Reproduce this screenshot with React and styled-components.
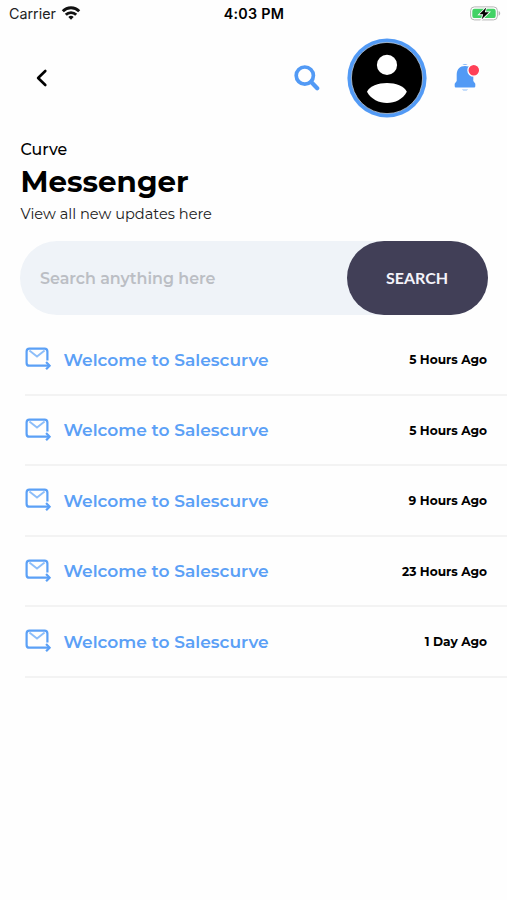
import React from 'react';
import styled, { createGlobalStyle } from 'styled-components';

const messages = [
  { id: 1, title: 'Welcome to Salescurve', time: '5 Hours Ago' },
  { id: 2, title: 'Welcome to Salescurve', time: '5 Hours Ago' },
  { id: 3, title: 'Welcome to Salescurve', time: '9 Hours Ago' },
  { id: 4, title: 'Welcome to Salescurve', time: '23 Hours Ago' },
  { id: 5, title: 'Welcome to Salescurve', time: '1 Day Ago' },
];

const WifiIcon = () => (
  <svg width="20" height="14" viewBox="0 0 20 14" fill="none" stroke="#111" strokeWidth="2.9">
    <path d="M1.8 5.2a11.6 11.6 0 0 1 16.4 0" />
    <path d="M4.8 8.8a7.4 7.4 0 0 1 10.4 0" />
    <path d="M10 13.8 7.3 11.1a3.9 3.9 0 0 1 5.4 0Z" fill="#111" stroke="none" />
  </svg>
);

const BatteryIcon = () => (
  <svg width="31" height="15" viewBox="0 0 31 15">
    <rect x="0.6" y="0.9" width="26.8" height="13" rx="3.8" fill="#fff" stroke="#b5b5b5" />
    <rect x="2.3" y="2.7" width="23.4" height="9.4" rx="2.2" fill="#43d266" />
    <path d="M28.7 5v4.8c2-.9 2-3.9 0-4.8Z" fill="#b5b5b5" />
    <path
      d="M16.2 1.5 9.4 8.3h3.8l-1.5 5 7.2-7h-4.1Z"
      fill="#000"
      stroke="#fff"
      strokeWidth="1.7"
      paintOrder="stroke"
    />
  </svg>
);

const BackIcon = () => (
  <svg width="12" height="18" viewBox="0 0 12 18" fill="none" stroke="#000" strokeWidth="2.6">
    <path d="M9.3 2 2.1 9l7.2 7" strokeLinecap="round" strokeLinejoin="round" />
  </svg>
);

const SearchIcon = () => (
  <svg width="26" height="26" viewBox="0 0 26 26" fill="none" stroke="#529af5">
    <circle cx="10.8" cy="10.6" r="8.6" strokeWidth="3.7" />
    <path d="m17.2 17 6 6.2" strokeWidth="4.2" strokeLinecap="round" />
  </svg>
);

const AvatarIcon = () => (
  <svg width="80" height="80" viewBox="0 0 80 80">
    <circle cx="40" cy="40" r="39.6" fill="#529af5" />
    <circle cx="40" cy="40" r="35.6" fill="#000" stroke="#b8c5d4" strokeWidth="0.8" />
    <circle cx="40" cy="26.9" r="10.1" fill="#fff" />
    <path d="M20 53.7C25 42.1 55 42.1 59.8 53.7C52 68.7 28 68.7 20 53.7Z" fill="#fff" />
  </svg>
);

const BellIcon = () => (
  <svg width="26" height="29" viewBox="0 0 26 29">
    <path
      d="M2.7 18V11.5C2.7 6.4 6 3 11 3s8.3 3.4 8.3 8.5V18l2 2.7v2.6q0 1.2-1.2 1.2H1.9q-1.2 0-1.2-1.2v-2.6Z"
      fill="#529af5"
    />
    <path d="M8.3 1.9Q11 0 13.7 1.9ZM7.8 26.4h6.4Q11 28.8 7.8 26.4Z" fill="#8bbbf8" />
    <circle cx="19.8" cy="7.3" r="5.9" fill="#ff4057" stroke="#fff" strokeWidth="1.3" />
  </svg>
);

const MailIcon = () => (
  <svg width="27" height="24" viewBox="0 0 27 24" fill="none" stroke="#5ba0f6" strokeWidth="2.2">
    <path d="M22.4 13.5V4.5Q22.4 1.7 19.6 1.7H4.4Q1.6 1.7 1.6 4.5V15.9Q1.6 18.7 4.4 18.7H24.4" />
    <path d="m21.1 15.1 3.5 3.6-3.5 3.6" />
    <path d="m4.4 3.6 7.6 6 7.6-6" stroke="#8dbef9" strokeWidth="1.9" />
  </svg>
);

export default function App() {
  return (
    <>
      <GlobalStyle />
      <Screen>
        <StatusBar>
          <Carrier>
            <span>Carrier</span>
            <WifiIcon />
          </Carrier>
          <Clock>4:03 PM</Clock>
          <Battery>
            <BatteryIcon />
          </Battery>
        </StatusBar>

        <Header>
          <IconButton aria-label="Back">
            <BackIcon />
          </IconButton>
          <Actions>
            <IconButton aria-label="Search">
              <SearchIcon />
            </IconButton>
            <Avatar aria-label="Profile">
              <AvatarIcon />
            </Avatar>
            <IconButton aria-label="Notifications">
              <BellIcon />
            </IconButton>
          </Actions>
        </Header>

        <Heading>
          <Eyebrow>Curve</Eyebrow>
          <Title>Messenger</Title>
          <Subtitle>View all new updates here</Subtitle>
        </Heading>

        <Searchbar>
          <SearchInput type="text" placeholder="Search anything here" />
          <SearchButton type="button">SEARCH</SearchButton>
        </Searchbar>

        <MessageList>
          {messages.map(message => (
            <MessageItem key={message.id}>
              <MailIcon />
              <MessageTitle>{message.title}</MessageTitle>
              <MessageTime>{message.time}</MessageTime>
            </MessageItem>
          ))}
        </MessageList>
      </Screen>
    </>
  );
}

const GlobalStyle = createGlobalStyle`
  * {
    box-sizing: border-box;
  }

  body {
    margin: 0;
    background-color: #fefefe;
    font-family: Montserrat, Inter, sans-serif;
  }

  button {
    padding: 0;
    border: none;
    background: none;
    cursor: pointer;
  }

  svg {
    display: block;
    flex-shrink: 0;
  }
`;

const Screen = styled.main`
  width: 507px;
  height: 900px;
  overflow: hidden;
  color: #000;
`;

const StatusBar = styled.div`
  height: 28px;
  padding: 0 6px 0 9px;
  display: grid;
  grid-template-columns: 1fr auto 1fr;
  align-items: center;
  font-family: Inter, sans-serif;
  font-size: 14.3px;
`;

const Carrier = styled.div`
  display: flex;
  align-items: center;
  gap: 5px;
  color: #222;

  span {
    margin-top: -1px;
  }

  svg {
    margin-top: -3px;
  }
`;

const Clock = styled.div`
  margin: -1px 2px 0 0;
  font-weight: 600;
  letter-spacing: 0.3px;
`;

const Battery = styled.div`
  display: flex;
  justify-content: flex-end;
  margin-top: -2px;
`;

const Header = styled.header`
  height: 99px;
  padding: 0 27.5px 0 36px;
  display: flex;
  justify-content: space-between;
  align-items: center;
`;

const IconButton = styled.button`
  display: flex;
`;

const Actions = styled.div`
  display: flex;
  align-items: center;
  gap: 27px;
`;

const Avatar = styled.button`
  border-radius: 50%;
`;

const Heading = styled.section`
  padding: 13px 20.5px 0;
`;

const Eyebrow = styled.p`
  margin: 0;
  font-size: 15.8px;
  font-weight: 500;
  line-height: 20px;
`;

const Title = styled.h1`
  margin: 0;
  font-size: 29.3px;
  font-weight: 700;
  line-height: 44px;
`;

const Subtitle = styled.p`
  margin: 0;
  color: #222;
  font-size: 14.6px;
  line-height: 20px;
`;

const Searchbar = styled.form`
  height: 74px;
  margin: 17px 19px 0 20px;
  display: flex;
  border-radius: 37px;
  background-color: #eff3f8;
`;

const SearchInput = styled.input`
  flex: 1;
  min-width: 0;
  padding: 0 20px;
  border: none;
  outline: none;
  background: none;
  font-family: inherit;
  font-size: 15.9px;
  font-weight: 600;

  &::placeholder {
    color: #bbbec4;
    opacity: 1;
  }
`;

const SearchButton = styled.button`
  width: 141px;
  padding: 0 1px 1px 0;
  border-radius: 37px;
  background-color: #413f57;
  color: #f4f3fa;
  font-family: Lato, sans-serif;
  font-size: 16px;
  font-weight: 700;
`;

const MessageList = styled.ul`
  margin: 10px 0 0 25px;
  padding: 0;
  list-style: none;
`;

const MessageItem = styled.li`
  height: 70.5px;
  padding: 1px 20px 0 0;
  display: flex;
  align-items: center;
  border-bottom: 2px solid #f3f3f3;

  svg {
    margin-top: -1px;
  }
`;

const MessageTitle = styled.span`
  margin-left: 11.5px;
  color: #5ba0f6;
  font-size: 17.05px;
  font-weight: 600;
`;

const MessageTime = styled.span`
  margin-left: auto;
  font-size: 12.2px;
  font-weight: 700;
`;
